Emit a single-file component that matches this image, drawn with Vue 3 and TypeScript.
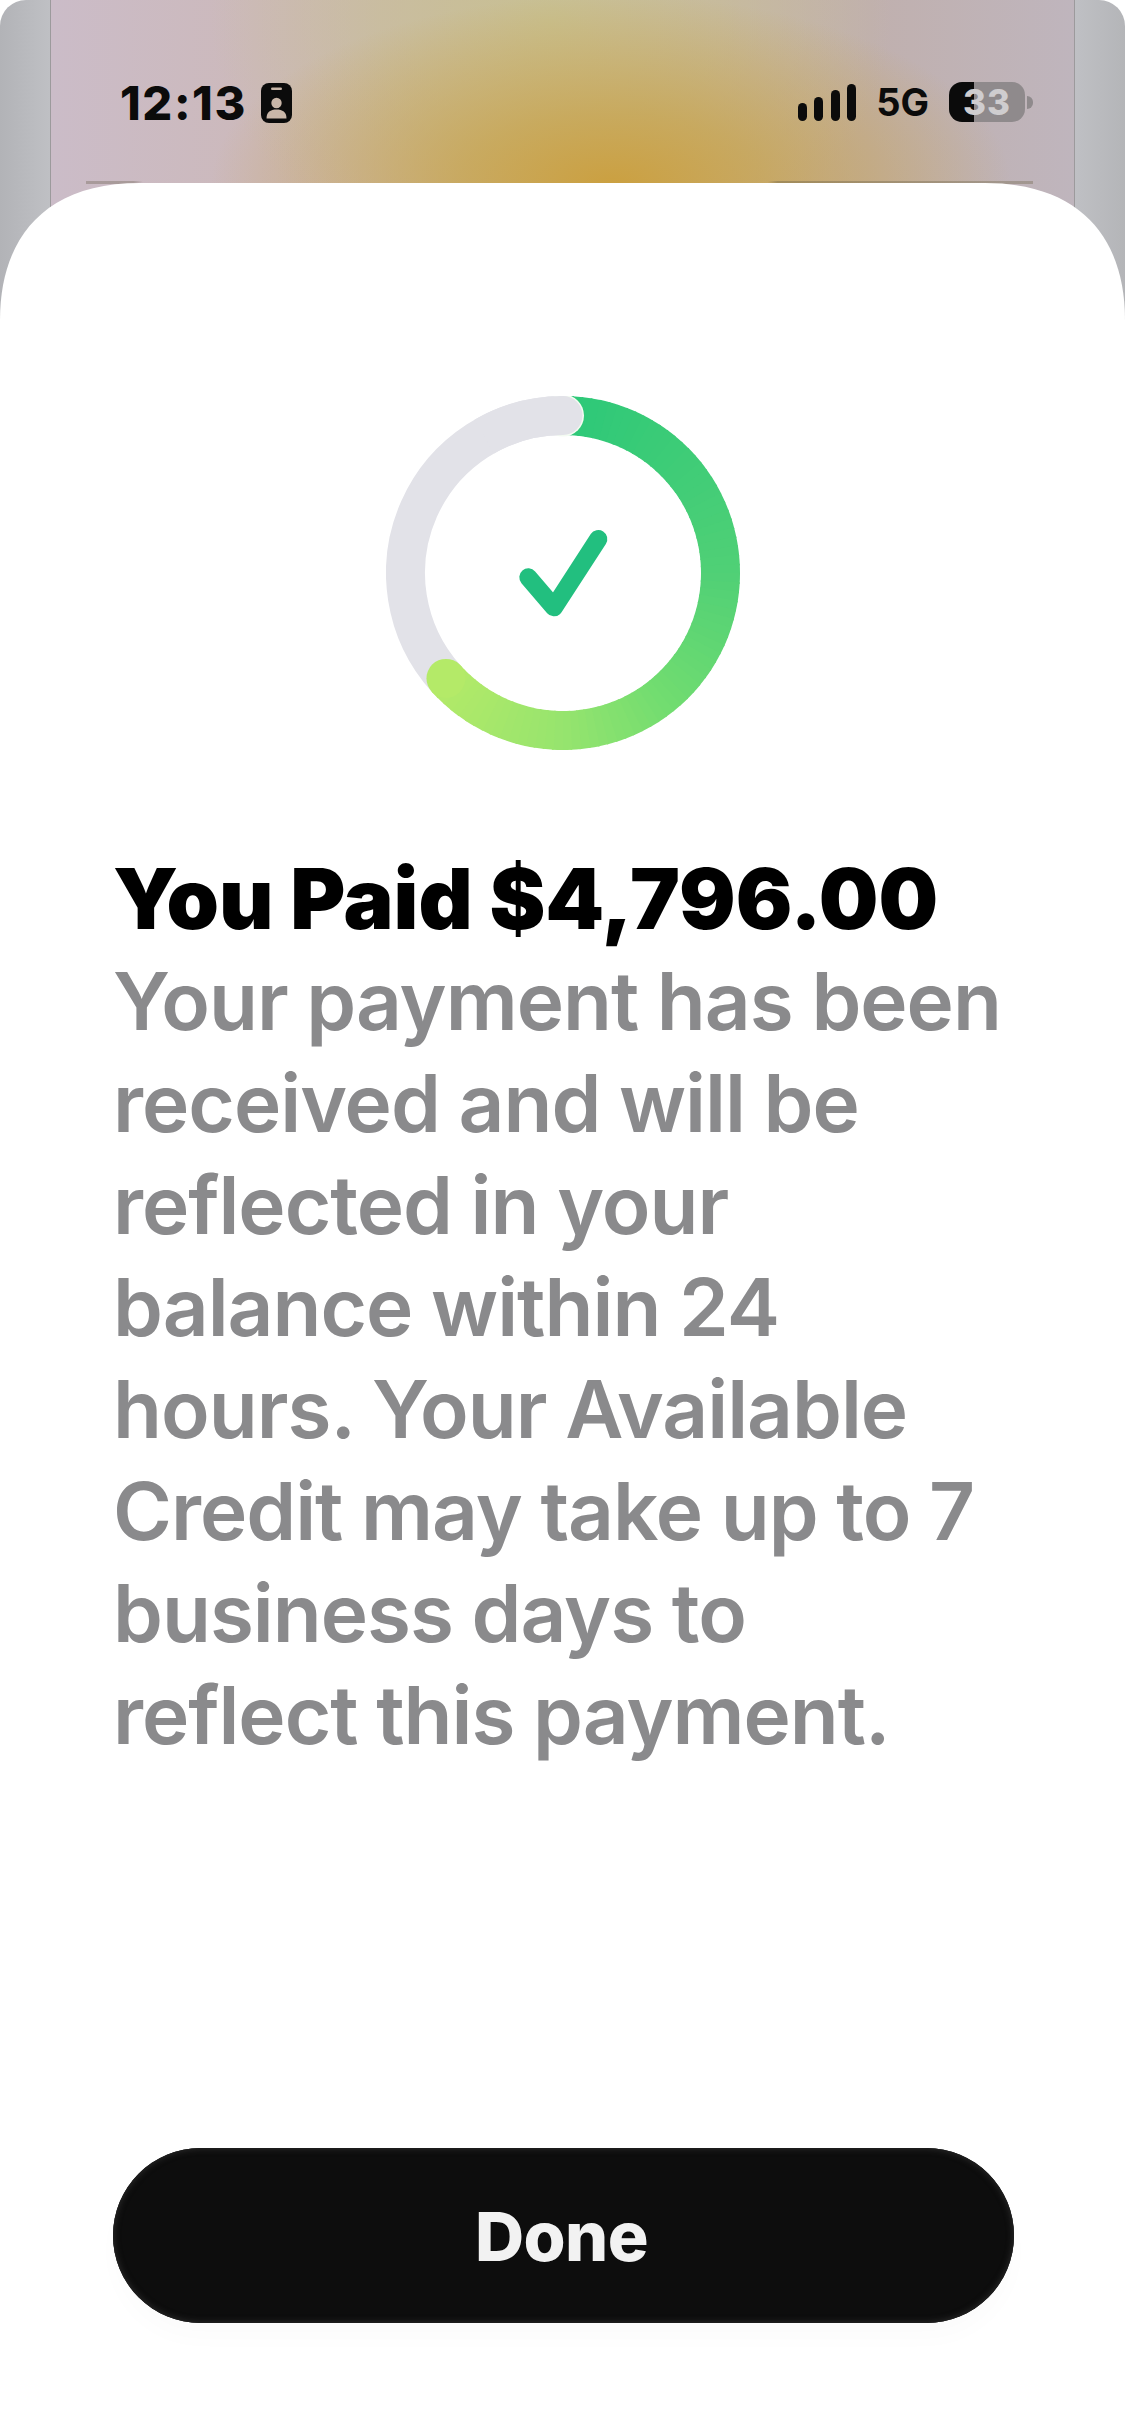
<template>
  <div class="screen">
    <!-- 後ろのカード（シートの背面） -->
    <div class="backdrop">
      <div class="back-card"></div>
      <div class="sheet-edge"></div>
    </div>

    <header class="status-bar">
      <div class="status-left">
        <span class="time">12:13</span>
        <svg class="id-icon" width="31" height="40" viewBox="0 0 31 40">
          <rect width="31" height="40" rx="8" fill="#0b0b0b" />
          <rect x="10" y="4.5" width="11" height="2.6" rx="1.3" fill="#c9b6a8" />
          <circle cx="15.5" cy="20" r="5.2" fill="#c9b6a8" />
          <path d="M5.5 35.5 C5.5 29 9.5 26.5 15.5 26.5 C21.5 26.5 25.5 29 25.5 35.5 Z" fill="#c9b6a8" />
        </svg>
      </div>
      <div class="status-right">
        <div class="signal">
          <i v-for="h in signalBars" :key="h" :style="{ height: `${h}px` }"></i>
        </div>
        <span class="network">5G</span>
        <div class="battery">
          <div class="battery-body"><span>33</span></div>
          <div class="battery-tip"></div>
        </div>
      </div>
    </header>

    <main class="sheet">
      <svg class="ring" width="354" height="354" viewBox="0 0 354 354">
        <path :d="grayArc" fill="none" stroke="#e2e2e8" stroke-width="39" />
        <path
          v-for="seg in ringSegments"
          :key="seg.d"
          :d="seg.d"
          :stroke="seg.color"
          fill="none"
          stroke-width="39"
        />
        <circle :cx="grayCap.x" :cy="grayCap.y" r="21" fill="#f4fbf2" />
        <circle :cx="grayCap.x" :cy="grayCap.y" r="19.5" fill="#e2e2e8" />
        <path :d="grayTop" fill="none" stroke="#e2e2e8" stroke-width="39" />
        <circle :cx="limeCap.x" :cy="limeCap.y" r="19.5" fill="#b4ea68" />
        <path
          d="M142.3 181.3 L168 211.3 L212.3 143"
          fill="none"
          stroke="#22bf7f"
          stroke-width="18"
          stroke-linecap="round"
          stroke-linejoin="round"
        />
      </svg>

      <h1 class="title">You Paid $4,796.00</h1>
      <p class="message">
        <span v-for="line in messageLines" :key="line">{{ line }}</span>
      </p>

      <button class="done" type="button">Done</button>
    </main>
  </div>
</template>

<script setup lang="ts">
const signalBars = [18, 24, 31, 37];

const messageLines = [
  "Your payment has been",
  "received and will be",
  "reflected in your",
  "balance within 24",
  "hours. Your Available",
  "Credit may take up to 7",
  "business days to",
  "reflect this payment.",
];

// リングの座標（時計回り、0度が真上）
const CENTER = 177;
const RADIUS = 157.5;
const END_ANGLE = 228;

const point = (deg: number) => {
  const rad = (deg * Math.PI) / 180;
  return { x: CENTER + RADIUS * Math.sin(rad), y: CENTER - RADIUS * Math.cos(rad) };
};

const arc = (from: number, to: number) => {
  const a = point(from);
  const b = point(to);
  const large = to - from > 180 ? 1 : 0;
  return `M${a.x.toFixed(2)} ${a.y.toFixed(2)} A${RADIUS} ${RADIUS} 0 ${large} 1 ${b.x.toFixed(2)} ${b.y.toFixed(2)}`;
};

// 色の停止点: 上部の緑から左下のライムへ
const stops: [number, number[]][] = [
  [0, [44, 200, 120]],
  [90, [80, 208, 118]],
  [140, [112, 220, 112]],
  [180, [150, 228, 110]],
  [228, [180, 234, 104]],
];

const colorAt = (deg: number) => {
  const i = Math.max(stops.findIndex(([s]) => s >= deg), 1);
  const [s0, c0] = stops[i - 1];
  const [s1, c1] = stops[i];
  const t = (deg - s0) / (s1 - s0);
  const rgb = c0.map((v, n) => Math.round(v + (c1[n] - v) * t));
  return `rgb(${rgb.join(",")})`;
};

const ringSegments = Array.from({ length: 76 }, (_, i) => {
  const from = i * 3;
  return { d: arc(from, Math.min(from + 3.6, END_ANGLE)), color: colorAt(from + 1.5) };
});

const grayArc = arc(END_ANGLE, 360);
const grayTop = arc(330, 360);
const grayCap = point(0);
const limeCap = point(END_ANGLE);
</script>

<style>
html,
body {
  margin: 0;
  background: #fff;
}
</style>

<style scoped>
.screen {
  position: relative;
  width: 1125px;
  height: 2436px;
  display: flex;
  flex-direction: column;
  overflow: hidden;
  background: #fff;
  font-family: Inter, "Liberation Sans", sans-serif;
}

.backdrop {
  position: absolute;
  top: 0;
  left: 0;
  right: 0;
  height: 420px;
  background: linear-gradient(90deg, #b2b3b7 0, #bfc0c4 50px, #bfc0c4 1075px, #b4b5b8 100%);
  border-radius: 26px 26px 0 0;
}

.back-card {
  position: absolute;
  top: -20px;
  bottom: 0;
  left: 50px;
  right: 50px;
  border-left: 1px solid #9c9a9c;
  border-right: 1px solid #9c9a9c;
  background:
    radial-gradient(ellipse 400px 190px at 560px 205px, #cba040 0, rgba(200, 163, 72, 0.72) 38%, rgba(200, 175, 100, 0) 100%),
    radial-gradient(ellipse 340px 260px at 500px 40px, #c8c092 0, rgba(200, 192, 146, 0.6) 50%, rgba(200, 192, 146, 0) 100%),
    linear-gradient(90deg, #cbbcc8 0, #ccb9bb 20%, #cab6ac 50%, #c0b0ae 80%, #bfb5bd 100%);
}

.sheet-edge {
  position: absolute;
  top: 181px;
  left: 86px;
  right: 92px;
  height: 3px;
  opacity: 0.55;
  background: linear-gradient(
    90deg,
    #8c8078 0,
    #8c8078 5%,
    transparent 6%,
    transparent 72%,
    #85754f 73%,
    #8a8070 100%
  );
}

.status-bar {
  position: relative;
  height: 183px;
  flex: none;
  box-sizing: border-box;
  padding: 82px 92px 0 120px;
  display: flex;
  justify-content: space-between;
  align-items: flex-start;
  color: #0b0b0b;
}

.status-left {
  display: flex;
  align-items: center;
  gap: 14px;
}

.time {
  font-size: 47px;
  line-height: 42px;
  font-weight: 800;
  letter-spacing: 1.6px;
}

.status-right {
  display: flex;
  align-items: center;
  gap: 20px;
  height: 40px;
}

.signal {
  display: flex;
  align-items: flex-end;
  gap: 7.5px;
}

.signal i {
  display: block;
  width: 9px;
  border-radius: 4.5px;
  background: #0b0b0b;
}

.network {
  font-size: 38px;
  font-weight: 700;
  line-height: 40px;
}

.battery {
  display: flex;
  align-items: center;
  gap: 2px;
}

.battery-body {
  width: 76px;
  height: 40px;
  border-radius: 13px;
  display: flex;
  align-items: center;
  justify-content: center;
  background: linear-gradient(90deg, #0b0b0b 0, #0b0b0b 33%, #8f8a8c 33%, #8f8a8c 100%);
}

.battery-body span {
  font-size: 35px;
  font-weight: 800;
  line-height: 40px;
  letter-spacing: 1px;
  color: #cfcdcf;
}

.battery-tip {
  width: 6px;
  height: 13px;
  border-radius: 0 7px 7px 0;
  background: #8f8a8c;
}

.sheet {
  position: relative;
  flex: 1;
  display: flex;
  flex-direction: column;
  box-sizing: border-box;
  padding: 213px 111px 113px 113px;
  background: #fff;
  clip-path: path("M0 137 C0 60 40 0 140 0 L985 0 C1085 0 1125 60 1125 137 L1125 2253 L0 2253 Z");
}

.ring {
  display: block;
  flex: none;
  align-self: center;
  margin-right: 2px;
}

.title {
  margin: 98px 0 0;
  font-size: 84px;
  line-height: 102px;
  font-weight: 900;
  color: #000;
  white-space: nowrap;
}

.message {
  margin: 0;
  font-size: 80px;
  line-height: 102px;
  font-weight: 600;
  letter-spacing: -1px;
  word-spacing: -0.5px;
  color: #8a8a8c;
}

.message span {
  display: block;
  white-space: nowrap;
}

.done {
  margin-top: auto;
  height: 175px;
  flex: none;
  border: 0;
  border-radius: 88px;
  padding: 0 4px 0 0;
  background: #0d0d0d;
  box-shadow:
    inset 0 0 0 1px #1c1c1c,
    inset 0 0 7px #333,
    0 16px 22px rgba(0, 0, 0, 0.015);
  color: #f2f2f2;
  font-family: inherit;
  font-size: 68px;
  font-weight: 800;
  letter-spacing: -0.6px;
}
</style>
